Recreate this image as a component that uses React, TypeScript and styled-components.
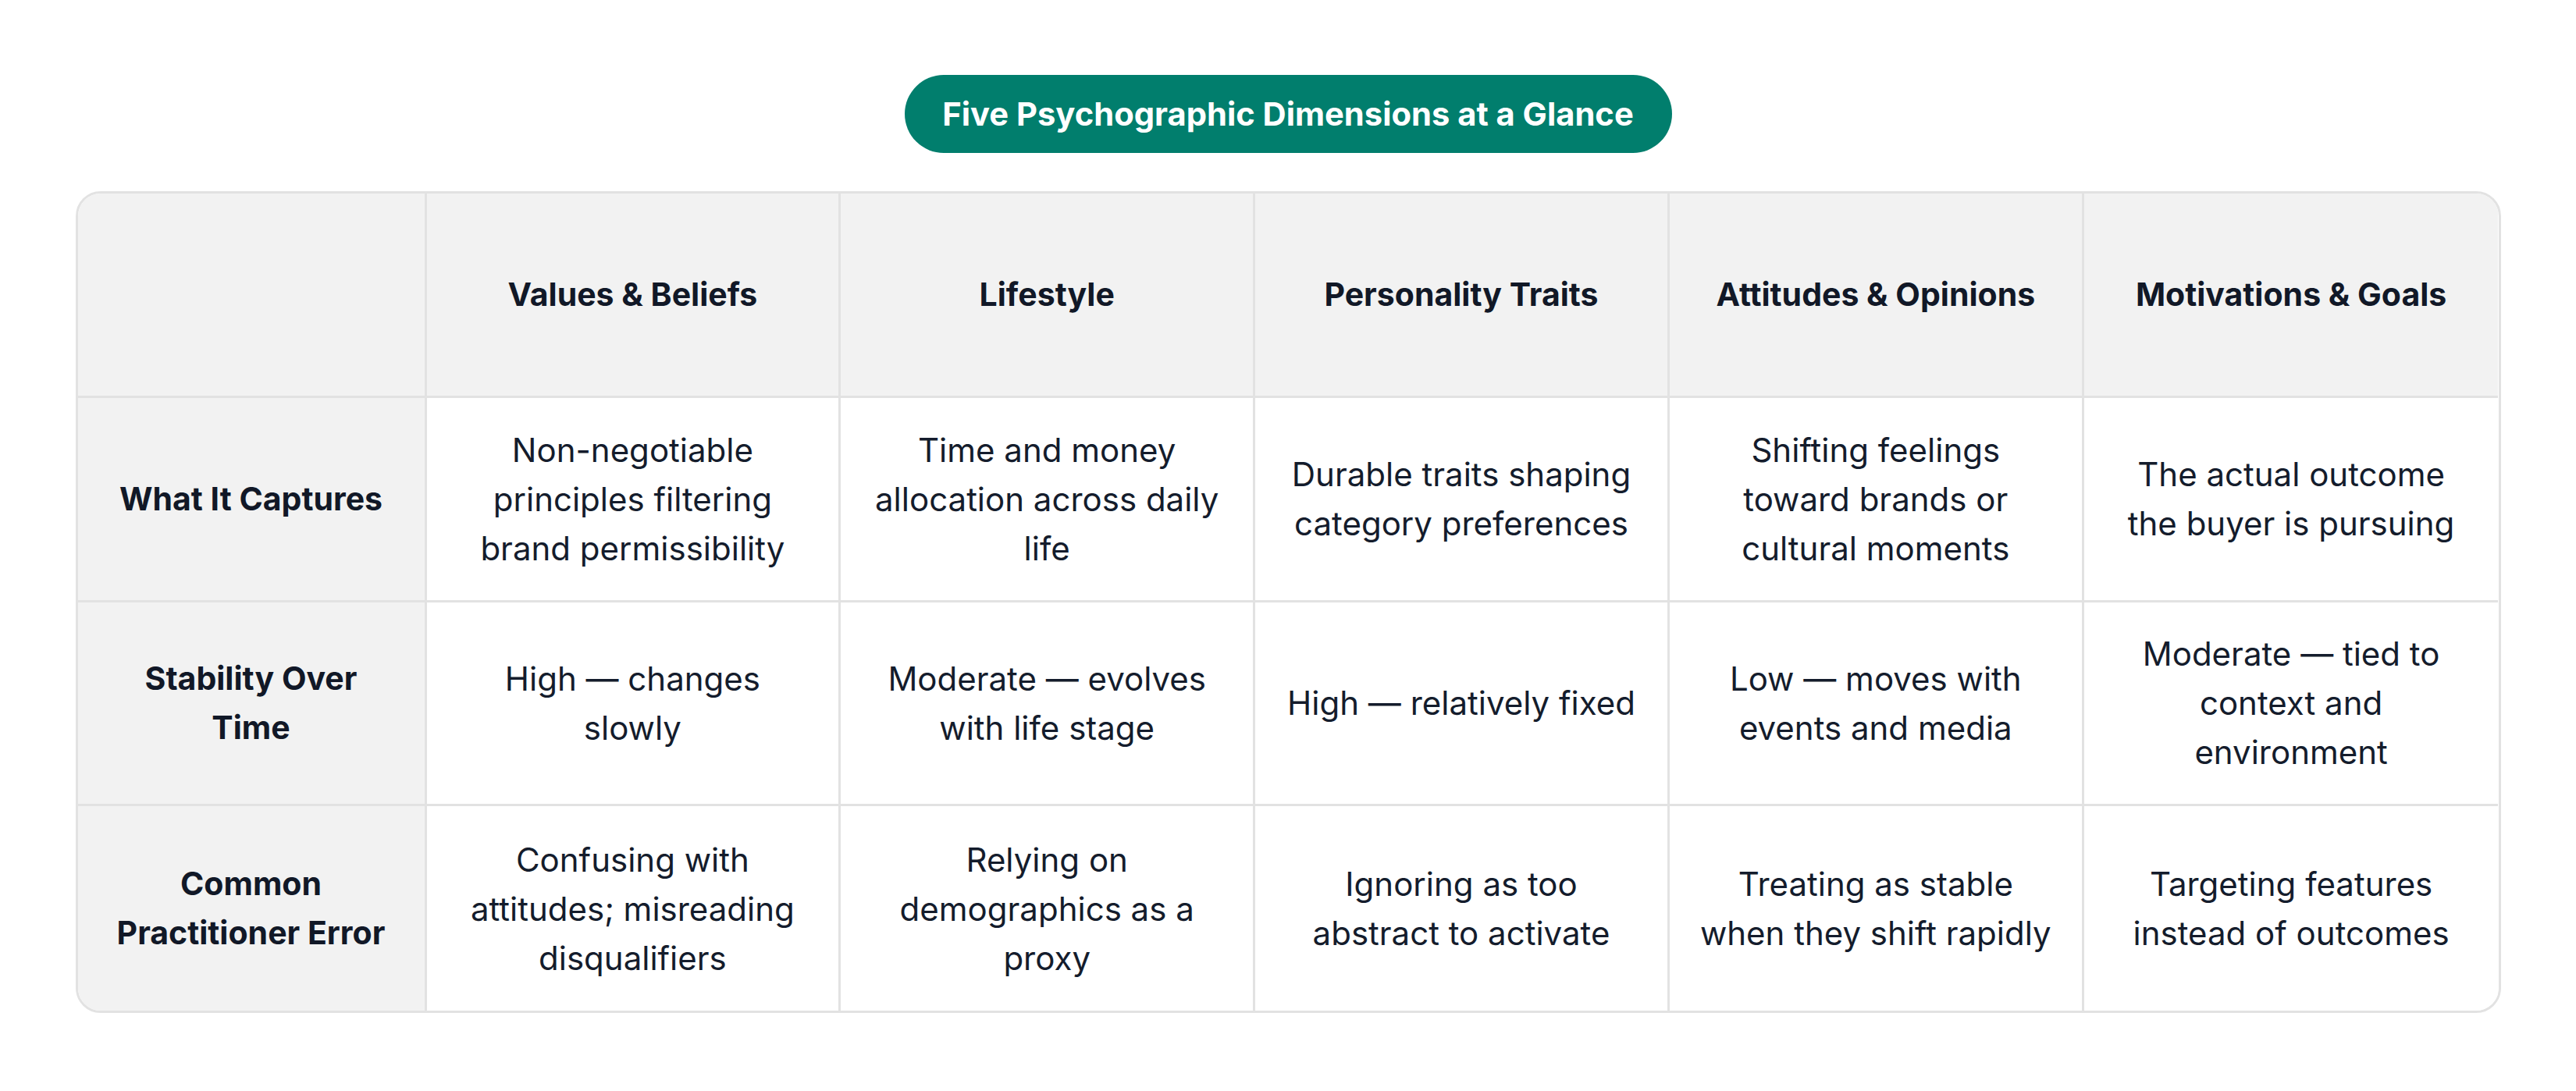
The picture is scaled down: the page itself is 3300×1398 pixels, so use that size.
import React from 'react'
import styled, { createGlobalStyle } from 'styled-components'

const GlobalStyle = createGlobalStyle`
  html, body {
    margin: 0;
    padding: 0;
    background: #ffffff;
  }
  body {
    font-family: Inter, "Noto Sans", "Liberation Sans", sans-serif;
    color: #111827;
  }
  * { box-sizing: border-box; }
`

const dimensions = [
    'Values & Beliefs',
    'Lifestyle',
    'Personality Traits',
    'Attitudes & Opinions',
    'Motivations & Goals',
]

const rows = [
    {
        label: 'What It Captures',
        cells: [
            'Non-negotiable principles filtering brand permissibility',
            'Time and money allocation across daily life',
            'Durable traits shaping category preferences',
            'Shifting feelings toward brands or cultural moments',
            'The actual outcome the buyer is pursuing',
        ],
    },
    {
        label: 'Stability Over Time',
        cells: [
            'High — changes slowly',
            'Moderate — evolves with life stage',
            'High — relatively fixed',
            'Low — moves with events and media',
            'Moderate — tied to context and environment',
        ],
    },
    {
        label: 'Common Practitioner Error',
        cells: [
            'Confusing with attitudes; misreading disqualifiers',
            'Relying on demographics as a proxy',
            'Ignoring as too abstract to activate',
            'Treating as stable when they shift rapidly',
            'Targeting features instead of outcomes',
        ],
    },
]

/**
 * Comparison grid of the five psychographic dimensions
 */
const App = () => {
    return (
        <Page>
            <GlobalStyle />
            <TitlePill>Five Psychographic Dimensions at a Glance</TitlePill>
            <Table>
                <Cell head first />
                {dimensions.map((d, i) => (
                    <Cell key={d} head last={i === dimensions.length - 1}>
                        <HeadText>{d}</HeadText>
                    </Cell>
                ))}
                {rows.map((row, r) => (
                    <React.Fragment key={row.label}>
                        <Cell head first bottom={r === rows.length - 1}>
                            <HeadText>{row.label}</HeadText>
                        </Cell>
                        {row.cells.map((c, i) => (
                            <Cell
                                key={i}
                                last={i === row.cells.length - 1}
                                bottom={r === rows.length - 1}
                            >
                                <BodyText>{c}</BodyText>
                            </Cell>
                        ))}
                    </React.Fragment>
                ))}
            </Table>
        </Page>
    )
}

const Page = styled.div`
display: flex;
flex-direction: column;
align-items: center;
padding: 96px 0 100px;
min-height: 1398px;
`

const TitlePill = styled.div`
height: 100px;
width: 983px;
display: flex;
align-items: center;
justify-content: center;
background: #017e6d;
color: #ffffff;
border-radius: 50px;
font-size: 41.7px;
font-weight: 650;
margin-bottom: 49px;
`

const Table = styled.div`
width: 3107px;
height: 1053px;
display: grid;
grid-template-columns: 447px repeat(5, 1fr);
grid-template-rows: repeat(4, 1fr);
border: 3px solid #e2e2e2;
border-radius: 32px;
overflow: hidden;
`

const Cell = styled.div<{ head?: boolean; first?: boolean; last?: boolean; bottom?: boolean }>`
display: flex;
align-items: center;
justify-content: center;
text-align: center;
padding: 0 ${props => props.first ? '46px' : '36px'};
background: ${props => props.head ? '#f2f2f2' : '#ffffff'};
border-right: ${props => props.last ? 'none' : '3px solid #e2e2e2'};
border-bottom: ${props => props.bottom ? 'none' : '3px solid #e2e2e2'};
`

const HeadText = styled.span`
font-size: 41px;
font-weight: 700;
line-height: 63px;
color: #111827;
`

const BodyText = styled.span`
font-size: 42px;
font-weight: 400;
line-height: 63px;
color: #141c2c;
`

export default App
